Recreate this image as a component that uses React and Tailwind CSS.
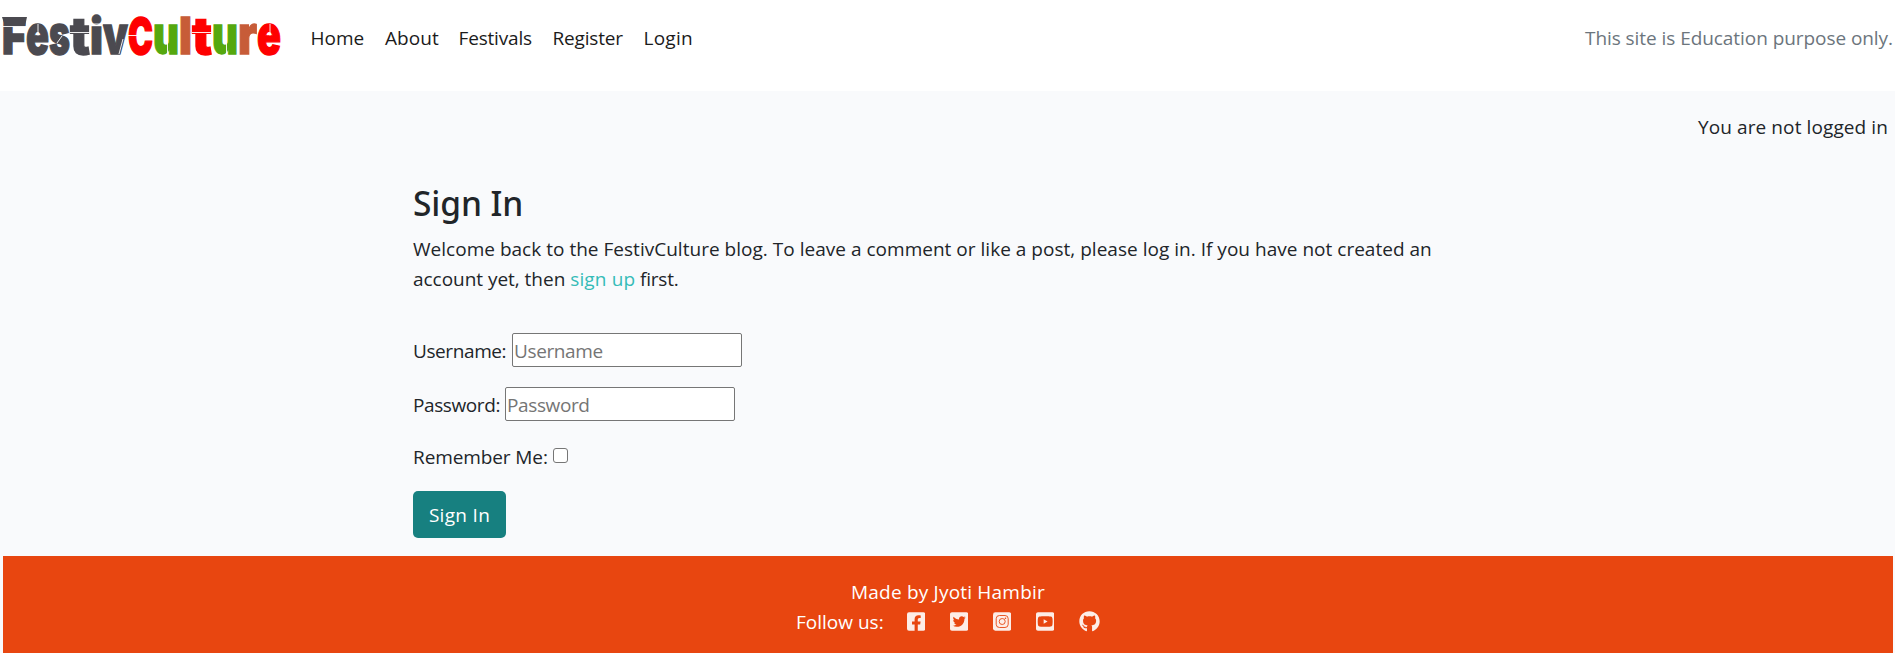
import { FaFacebookSquare, FaTwitterSquare, FaYoutubeSquare, FaGithub } from 'react-icons/fa';

// Each glyph: character, left edge, drawn width, font size, colour
const LOGO = [
  ['F', 2, 24, 49.5, '#4b4a50'],
  ['e', 26, 23, 54, '#4b4a50'],
  ['s', 49, 21, 54, '#4b4a50'],
  ['t', 70, 20, 51, '#4b4a50'],
  ['i', 90, 13, 50, '#4b4a50'],
  ['v', 103, 25, 54, '#4b4a50'],
  ['C', 128, 25, 49, '#fe0000'],
  ['u', 153, 26, 54, '#55a80e'],
  ['l', 179, 13, 51, '#c75c38'],
  ['t', 192, 20, 51, '#fe0000'],
  ['u', 212, 26, 54, '#55a80e'],
  ['r', 238, 19, 54, '#c75c38'],
  ['e', 257, 24, 54, '#fe0000'],
];

function Logo() {
  return (
    <svg width="284" height="80" viewBox="0 0 284 80" className="block" aria-label="FestivCulture">
      {LOGO.map(([c, x, w, s, fill], i) => (
        <text
          key={i}
          x={x}
          y="54.4"
          fontFamily="Inter, sans-serif"
          fontWeight="900"
          fontSize={s}
          textLength={w}
          lengthAdjust="spacingAndGlyphs"
          fill={fill}
          stroke={fill}
          strokeWidth="1.3"
        >
          {c}
        </text>
      ))}
      <path d="M2 17H27L25 26H5Z" fill="#4b4a50" />
      <path
        d="M3 26.500H26M38 24V35.500M57 43L62 36M70 32.500H90M91 24H103M119 54L123 39M128 35.500H141M192 32.500H212M167.500 43V55M226.500 43V55M270 24V35.500"
        stroke="#fff"
        strokeWidth="0.9"
        fill="none"
      />
    </svg>
  );
}

function InstagramSquare() {
  return (
    <svg width="18.4" height="21" viewBox="0 0 18.4 21">
      <rect y="1.3" width="18.4" height="18.4" rx="2.4" fill="currentColor" />
      <g fill="none" stroke="#e84610" strokeWidth="0.9">
        <rect x="3.2" y="4.5" width="12" height="12" rx="3.2" />
        <circle cx="9.2" cy="10.5" r="3" />
      </g>
      <circle cx="12.500" cy="7.200" r="0.8" fill="#e84610" />
    </svg>
  );
}

export default function App() {
  return (
    <div className="flex h-[653px] flex-col overflow-hidden bg-[#f9fafc] font-['Open_Sans',sans-serif] text-[19px] leading-[30px] text-[#212529]">
      <header className="flex h-[91px] shrink-0 items-start bg-white pr-[2px]">
        <Logo />
        <nav className="flex pt-[23px] pl-[26.500px] text-[#1b1b1b]">
          <a className="w-[74.500px]">Home</a>
          <a className="w-[73.500px] tracking-[0.1px]">About</a>
          <a className="w-[94px] tracking-[-0.17px]">Festivals</a>
          <a className="w-[91px] tracking-[-0.18px]">Register</a>
          <a className="tracking-[0.25px]">Login</a>
        </nav>
        <span className="ml-auto pt-[23px] tracking-[-0.06px] text-[#6c757d]">This site is Education purpose only.</span>
      </header>

      <div className="flex h-[91px] shrink-0 justify-end pt-[21px] pr-[7px] tracking-[0.1px]">
        You are not logged in
      </div>

      <main className="ml-[413px] h-[374px] w-[1040px] shrink-0">
        <h1 className="mb-[10px] h-[42px] font-['Noto_Sans',sans-serif] text-[33.5px] leading-[42px] font-medium tracking-[-0.1px]">
          Sign In
        </h1>
        <p className="whitespace-nowrap tracking-[0.02px]">
          Welcome back to the FestivCulture blog. To leave a comment or like a post, please log in. If you have not
          created an
          <br />
          <span className="tracking-[-0.03px]">account yet, then </span>
          <a className="tracking-[0.15px] text-[#35bcb8]">sign up</a>
          <span className="tracking-[-0.2px]"> first.</span>
        </p>
        <form>
          <label className="mt-[39px] flex h-[34px] items-center">
            <span className="w-[99px] pt-px tracking-[-0.4px]">Username:</span>
            <input
              type="text"
              placeholder="Username"
              className="h-[34px] w-[230px] rounded-[2px] border border-[#767676] bg-white px-px pt-[2px] tracking-[-0.38px] placeholder:text-[#757575]"
            />
          </label>
          <label className="mt-5 flex h-[34px] items-center">
            <span className="w-[92px] pt-px tracking-[-0.4px]">Password:</span>
            <input
              type="password"
              placeholder="Password"
              className="h-[34px] w-[230px] rounded-[2px] border border-[#767676] bg-white px-px pt-[2px] tracking-[-0.38px] placeholder:text-[#757575]"
            />
          </label>
          <label className="mt-[21px] flex h-[30px] items-start">
            <span className="w-[140px] tracking-[-0.1px]">Remember Me:</span>
            <input
              type="checkbox"
              className="mt-[6px] size-[15px] appearance-none rounded-[3px] border border-[#767676] bg-white"
            />
          </label>
          <button
            type="button"
            className="mt-[19px] flex h-[47px] w-[93px] items-center justify-center rounded-[5px] bg-[#178080] pt-px tracking-[0.3px] text-white"
          >
            Sign In
          </button>
        </form>
      </main>

      <footer className="mr-[2px] ml-[3px] flex grow flex-col items-center bg-[#e84610] pt-[21px] text-white">
        <div className="tracking-[0.2px]">Made by Jyoti Hambir</div>
        <div className="flex">
          <span className="w-[111px]">Follow us:</span>
          <div className="flex gap-[24.6px] pt-[4px] text-[21px] text-white/90">
            <FaFacebookSquare className="w-[18.4px]" />
            <FaTwitterSquare className="w-[18.4px]" />
            <InstagramSquare />
            <FaYoutubeSquare className="w-[18.4px]" />
            <FaGithub />
          </div>
        </div>
      </footer>
    </div>
  );
}
